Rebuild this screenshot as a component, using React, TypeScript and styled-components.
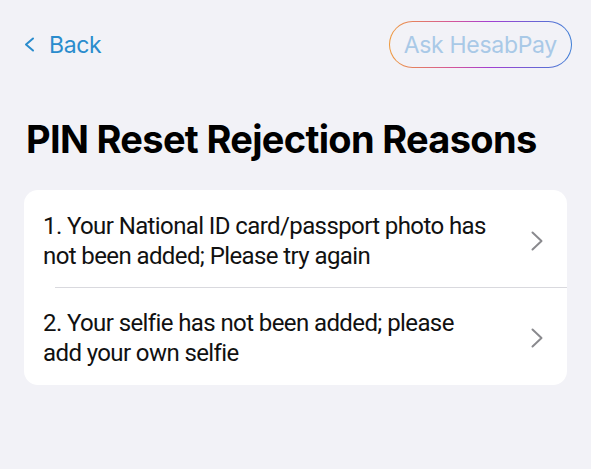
import React from "react";
import styled, { createGlobalStyle } from "styled-components";

const GlobalStyle = createGlobalStyle`
  html, body {
    margin: 0;
    padding: 0;
    background: #f2f2f7;
  }
  body {
    font-family: Inter, "Noto Sans", "Liberation Sans", sans-serif;
    -webkit-font-smoothing: antialiased;
  }
`;

const Page = styled.div`
  min-height: 469px;
  padding: 21px 19px 0 24px;
  box-sizing: border-box;
  background: #f2f2f7;
`;

const Header = styled.div`
  display: flex;
  align-items: center;
  justify-content: space-between;
  height: 47px;
`;

const BackButton = styled.button`
  display: flex;
  align-items: center;
  gap: 14px;
  padding: 0;
  border: none;
  background: none;
  color: #2a8ccd;
  font-family: inherit;
  font-size: 23px;
  letter-spacing: -0.4px;
  cursor: pointer;
`;

const AskButton = styled.button`
  height: 47px;
  padding: 0 14px;
  border-radius: 24px;
  border: 1.5px solid transparent;
  background:
    linear-gradient(#f2f2f7, #f2f2f7) padding-box,
    linear-gradient(90deg, #ef9a3c 0%, #d4559a 35%, #a33fd2 55%, #3f7fd6 100%) border-box;
  color: #a9c9e7;
  font-family: inherit;
  font-size: 23px;
  letter-spacing: -0.3px;
  cursor: pointer;
`;

const Title = styled.h1`
  margin: 48px 0 0 2px;
  font-size: 38px;
  line-height: 46px;
  font-weight: 700;
  color: #000;
  letter-spacing: -0.68px;
`;

const Card = styled.div`
  margin: 28px 5px 0 0;
  background: #fff;
  border-radius: 14px;
  overflow: hidden;
`;

const Row = styled.div<{ $last?: boolean }>`
  display: flex;
  align-items: center;
  padding: ${(p) => (p.$last ? "20px 0 17px 19px" : "21px 0 16px 19px")};
  cursor: pointer;
`;

const Divider = styled.div`
  height: 1px;
  background: #d9d9de;
  margin-left: 31px;
`;

const RowText = styled.div`
  flex: 1;
  font-family: Roboto, "Liberation Sans", sans-serif;
  font-size: 24px;
  line-height: 30px;
  color: #111;
  letter-spacing: -0.6px;
`;

const Chevron = styled.svg`
  width: 12px;
  height: 20px;
  margin: 0 24px 0 40px;
  flex-shrink: 0;
`;

const reasons = [
  "1. Your National ID card/passport photo has not been added; Please try again",
  "2. Your selfie has not been added; please add your own selfie",
];

export default function App() {
  return (
    <Page>
      <GlobalStyle />
      <Header>
        <BackButton>
          <svg width="11" height="15" viewBox="0 0 11 15">
            <path
              d="M9 1.5 L2 7.5 L9 13.5"
              fill="none"
              stroke="#2a8ccd"
              strokeWidth="2"
              strokeLinecap="round"
              strokeLinejoin="round"
            />
          </svg>
          Back
        </BackButton>
        <AskButton>Ask HesabPay</AskButton>
      </Header>
      <Title>PIN Reset Rejection Reasons</Title>
      <Card>
        {reasons.map((r, i) => (
          <React.Fragment key={i}>
            {i > 0 && <Divider />}
            <Row $last={i === reasons.length - 1}>
              <RowText>{r}</RowText>
              <Chevron viewBox="0 0 12 20">
                <path
                  d="M1.5 1.5 L10.5 10 L1.5 18.5"
                  fill="none"
                  stroke="#8a8a8e"
                  strokeWidth="2"
                  strokeLinecap="round"
                  strokeLinejoin="round"
                />
              </Chevron>
            </Row>
          </React.Fragment>
        ))}
      </Card>
    </Page>
  );
}
